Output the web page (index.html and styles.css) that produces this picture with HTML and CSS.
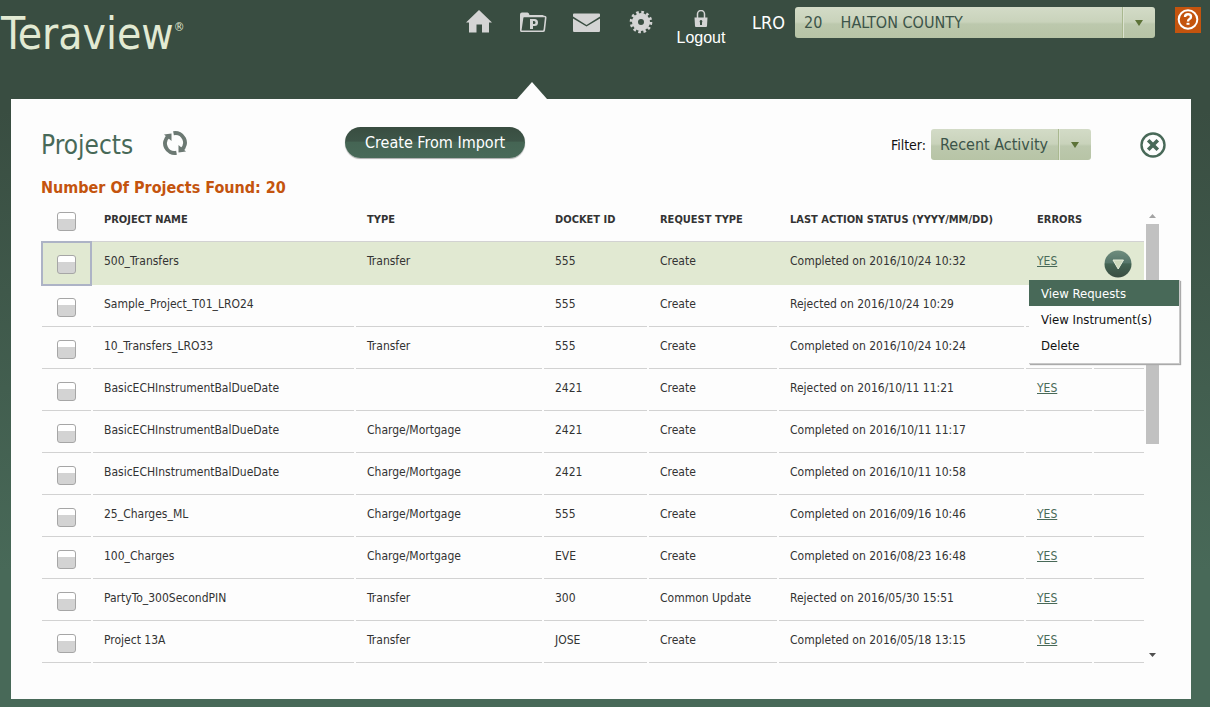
FILE: index.html
```html
<!DOCTYPE html>
<html lang="en">
<head>
<meta charset="utf-8">
<title>Teraview - Projects</title>
<link rel="stylesheet" href="styles.css">
</head>
<body>
<header class="topbar">
  <div class="logo">Teraview<span class="logo-mark">®</span></div>
  <nav class="nav">
    <a class="nav-item" href="#home" aria-label="Home">
      <svg width="28" height="24" viewBox="0 0 28 24"><path d="M14 0 27 12.500H24V22.500h-7v-8h-5.500v8H4V12.500H1z" fill="#d4d4d4"/></svg>
    </a>
    <a class="nav-item active" href="#projects" aria-label="Projects">
      <svg width="28" height="24" viewBox="0 0 28 24"><path d="M1 20V4.500Q1 2.500 3 2.500h5.500Q10 2.500 10.500 5H23.500q1.500 0 1.500 2H3v13z" fill="#d4d4d4"/><path d="M5 6.500h20.500q1.300 0 1.200 1.200L25.300 20q-.2 1.200-1.400 1.200H2.800q-1.200 0-1-1.200L3.600 7.700Q3.800 6.500 5 6.500z" fill="#394d41" stroke="#d4d4d4" stroke-width="1.600"/><path d="M11 9h4.500a3.500 3.500 0 0 1 0 7H14v3h-3zM14 11v3h1a1.500 1.500 0 0 0 0-3z" fill="#d4d4d4" fill-rule="evenodd"/></svg>
    </a>
    <a class="nav-item" href="#mail" aria-label="Mail">
      <svg width="28" height="24" viewBox="0 0 28 24"><path d="M0 6.500V4.500q0-1 1-1h25q1 0 1 1v2l-13.500 8.500zM0 8.500l13.500 8L27 8.500V20.500q0 1.500-1 1.500H1Q0 22 0 20.500z" fill="#d4d4d4"/></svg>
    </a>
    <a class="nav-item" href="#settings" aria-label="Settings">
      <svg width="24" height="24" viewBox="-12 -12 24 24"><circle r="6" fill="none" stroke="#d4d4d4" stroke-width="6"/><circle r="9.800" fill="none" stroke="#d4d4d4" stroke-width="3" stroke-dasharray="2.600 2.531"/></svg>
    </a>
    <a class="nav-item logout" href="#logout">
      <svg width="14" height="18" viewBox="0 0 14 18"><path d="M3.500 8V4a3.500 3.500 0 0 1 7 0v4" fill="none" stroke="#d4d4d4" stroke-width="1.500"/><path d="M.5 7.500h13L13 16q0 1-1 1H2q-1 0-1-1z" fill="#d4d4d4"/><path d="M7 10a1.500 1.500 0 0 1 1 2.500V15H6v-2.500A1.500 1.500 0 0 1 7 10z" fill="#394d41"/></svg>
      <span>Logout</span>
    </a>
  </nav>
  <div class="lro">
    <label for="lro">LRO</label>
    <span class="picker picker-lro">
      <select id="lro"><option>20&nbsp;&nbsp;&nbsp;&nbsp;HALTON COUNTY</option></select>
    </span>
  </div>
  <a class="help" href="#help" aria-label="Help">
    <svg width="26" height="26" viewBox="0 0 26 26"><circle cx="13" cy="12.500" r="9.300" fill="none" stroke="#fff" stroke-width="2"/><path d="M10 10q0-2.800 3-2.800t3 2.500q0 1.500-1.500 2.300T13 14.500" fill="none" stroke="#fff" stroke-width="2.400"/><path d="M11.500 15.800h3v2h-3z" fill="#fff"/></svg>
  </a>
</header>

<main class="panel">
  <div class="toolbar">
    <h1>Projects</h1>
    <button class="icon-button refresh" type="button" aria-label="Refresh">
      <svg width="24" height="24" viewBox="0 0 24 24"><g fill="none" stroke="#6c7973" stroke-width="4"><path d="M13.500 21.800A9.600 9.600 0 0 1 5.500 5"/><path d="M10.500 2.200A9.600 9.600 0 0 1 18.500 19"/></g><path d="M1 3.500 8.500 2.500V10z" fill="#6c7973"/><path d="M23 20.500l-7.500 1V14z" fill="#6c7973"/></svg>
    </button>
    <button class="import" type="button">Create From Import</button>
    <div class="filter">
      <label for="filter">Filter:</label>
      <span class="picker picker-filter">
        <select id="filter"><option>Recent Activity</option></select>
      </span>
    </div>
    <button class="icon-button close" type="button" aria-label="Close">
      <svg width="26" height="26" viewBox="0 0 26 26"><circle cx="13" cy="13" r="11.500" fill="none" stroke="#486958" stroke-width="2.400"/><path d="M8.200 8.200l9.600 9.600M17.800 8.200l-9.600 9.600" stroke="#486958" stroke-width="3.600"/></svg>
    </button>
  </div>
  <h2>Number Of Projects Found: 20</h2>

  <div class="list">
    <table class="projects">
      <colgroup><col class="c-check"><col><col class="c-type"><col class="c-docket"><col class="c-request"><col class="c-status"><col class="c-errors"><col class="c-menu"></colgroup>
      <thead>
        <tr><th><input type="checkbox" aria-label="Select all"></th><th>PROJECT NAME</th><th>TYPE</th><th>DOCKET ID</th><th>REQUEST TYPE</th><th>LAST ACTION STATUS (YYYY/MM/DD)</th><th>ERRORS</th><th></th></tr>
      </thead>
      <tbody>
        <tr class="selected"><td><input type="checkbox" aria-label="500_Transfers"></td><td>500_Transfers</td><td>Transfer</td><td>555</td><td>Create</td><td>Completed on 2016/10/24 10:32</td><td><a href="#e1">YES</a></td>
          <td class="actions">
            <button class="icon-button" type="button" aria-label="Actions">
              <svg width="28" height="28" viewBox="0 0 28 28"><defs><linearGradient id="ball" x2="0" y2="1"><stop offset="0" stop-color="#6f8d7e"/><stop offset=".45" stop-color="#56766a"/><stop offset=".5" stop-color="#446453"/><stop offset="1" stop-color="#394d41"/></linearGradient></defs><circle cx="14" cy="14" r="13.500" fill="url(#ball)"/><path d="M9 10h10.500L14.200 19z" fill="#cdd9bd" stroke="#e6eedb"/></svg>
            </button>
            <div class="menu" role="menu">
              <button class="current" type="button" role="menuitem">View Requests</button>
              <button type="button" role="menuitem">View Instrument(s)</button>
              <button type="button" role="menuitem">Delete</button>
            </div>
          </td></tr>
        <tr><td><input type="checkbox" aria-label="Sample_Project_T01_LRO24"></td><td>Sample_Project_T01_LRO24</td><td></td><td>555</td><td>Create</td><td>Rejected on 2016/10/24 10:29</td><td></td><td></td></tr>
        <tr><td><input type="checkbox" aria-label="10_Transfers_LRO33"></td><td>10_Transfers_LRO33</td><td>Transfer</td><td>555</td><td>Create</td><td>Completed on 2016/10/24 10:24</td><td></td><td></td></tr>
        <tr><td><input type="checkbox" aria-label="BasicECHInstrumentBalDueDate"></td><td>BasicECHInstrumentBalDueDate</td><td></td><td>2421</td><td>Create</td><td>Rejected on 2016/10/11 11:21</td><td><a href="#e4">YES</a></td><td></td></tr>
        <tr><td><input type="checkbox" aria-label="BasicECHInstrumentBalDueDate"></td><td>BasicECHInstrumentBalDueDate</td><td>Charge/Mortgage</td><td>2421</td><td>Create</td><td>Completed on 2016/10/11 11:17</td><td></td><td></td></tr>
        <tr><td><input type="checkbox" aria-label="BasicECHInstrumentBalDueDate"></td><td>BasicECHInstrumentBalDueDate</td><td>Charge/Mortgage</td><td>2421</td><td>Create</td><td>Completed on 2016/10/11 10:58</td><td></td><td></td></tr>
        <tr><td><input type="checkbox" aria-label="25_Charges_ML"></td><td>25_Charges_ML</td><td>Charge/Mortgage</td><td>555</td><td>Create</td><td>Completed on 2016/09/16 10:46</td><td><a href="#e7">YES</a></td><td></td></tr>
        <tr><td><input type="checkbox" aria-label="100_Charges"></td><td>100_Charges</td><td>Charge/Mortgage</td><td>EVE</td><td>Create</td><td>Completed on 2016/08/23 16:48</td><td><a href="#e8">YES</a></td><td></td></tr>
        <tr><td><input type="checkbox" aria-label="PartyTo_300SecondPIN"></td><td>PartyTo_300SecondPIN</td><td>Transfer</td><td>300</td><td>Common Update</td><td>Rejected on 2016/05/30 15:51</td><td><a href="#e9">YES</a></td><td></td></tr>
        <tr><td><input type="checkbox" aria-label="Project 13A"></td><td>Project 13A</td><td>Transfer</td><td>JOSE</td><td>Create</td><td>Completed on 2016/05/18 13:15</td><td><a href="#e10">YES</a></td><td></td></tr>
      </tbody>
    </table>
    <div class="scrollbar" aria-hidden="true">
      <svg width="7" height="4" viewBox="0 0 7 4"><path d="M0 4 3.500 0 7 4z" fill="#a3a3a3"/></svg>
      <div class="thumb-track"><div class="thumb"></div></div>
      <svg width="7" height="4" viewBox="0 0 7 4"><path d="M0 0h7L3.500 4z" fill="#505050"/></svg>
    </div>
  </div>
</main>
</body>
</html>
```
FILE: styles.css
```css
* { box-sizing: border-box; }

body {
  margin: 0;
  min-height: 100vh;
  display: flex;
  flex-direction: column;
  font: 12px/16px "DejaVu Sans Condensed", "Noto Sans", sans-serif;
  color: #333;
  background: linear-gradient(#394d41 110px, #486958 570px);
}

button, select { font: inherit; color: inherit; }

/* Top bar */
.topbar {
  display: flex;
  align-items: flex-start;
  height: 99px;
  padding-right: 9px;
}

.logo {
  display: flex;
  padding: 7px 0 0 1px;
  font-size: 44px;
  line-height: 54px;
  color: #e2ead3;
}

.logo-mark { font-size: 12px; line-height: 40px; }

.nav { display: flex; align-self: stretch; margin-left: auto; }

.nav-item {
  position: relative;
  width: 54px;
  padding-top: 10px;
  display: flex;
  flex-direction: column;
  align-items: center;
  color: #fff;
  text-decoration: none;
}

.nav-item.active::after {
  content: "";
  position: absolute;
  left: 11px;
  bottom: 0;
  border: solid transparent;
  border-width: 0 15px 17px;
  border-bottom-color: #fdfdfd;
}

.logout { width: 66px; font: 16px/20px "Liberation Sans", Arial, sans-serif; }

.lro {
  display: flex;
  align-items: center;
  gap: 10px;
  margin: 7px 20px 0 18px;
  font-size: 18px;
}

.lro label { color: #fff; }

.picker { position: relative; display: block; }

.picker select {
  appearance: none;
  display: block;
  width: 100%;
  height: 31px;
  margin: 0;
  padding: 1px 34px 0 9px;
  border: 0;
  border-radius: 3px;
  font-size: 16px;
  color: #3c5449;
  background: linear-gradient(#d3dbc7, #c9d3bb 48%, #bcc8ad 55%, #b7c4a6);
}

.picker::before {
  content: "";
  position: absolute;
  top: 0;
  bottom: 0;
  right: 31px;
  width: 2px;
  background: linear-gradient(to right, #a9b88f 50%, #dbe2d0 50%);
  pointer-events: none;
}

.picker::after {
  content: "";
  position: absolute;
  top: 13px;
  right: 12px;
  border: solid transparent;
  border-width: 6px 4px 0;
  border-top-color: #5d7338;
  pointer-events: none;
}

.picker-lro { width: 360px; }
.picker-filter { width: 160px; }

.help { display: block; margin-top: 7px; background: #c4540e; }
.help svg { display: block; }

/* Panel */
.panel {
  flex: 1;
  margin: 0 19px 8px 11px;
  padding: 28px 25px 36px 30px;
  background: #fdfdfd;
}

.toolbar { display: flex; align-items: center; height: 35px; }

h1 { margin: 0; font-size: 26px; line-height: 32px; font-weight: normal; color: #486958; }

.icon-button { display: block; padding: 0; border: 0; background: none; }
.icon-button svg { display: block; }
.refresh { margin: 0 0 3px 30px; }

.import {
  align-self: flex-start;
  width: 180px;
  height: 31px;
  margin-left: 158px;
  padding: 0;
  border: 0;
  border-radius: 16px;
  font-size: 16px;
  color: #fff;
  background: linear-gradient(#394d41, #3d5548 45%, #456554 50%, #486958);
  box-shadow: 0 1px 1px #aaa;
}

.filter {
  display: flex;
  align-items: center;
  gap: 5px;
  margin-left: auto;
  font-size: 14px;
  color: #111;
}

.close { margin-left: 49px; }

h2 { margin: 14px 0 0; font-size: 16px; line-height: 24px; font-weight: bold; color: #c4540e; }

/* Project list */
.list { display: flex; margin-left: -1px; margin-right: 7px; }

.projects {
  flex: 1;
  table-layout: fixed;
  border-collapse: separate;
  border-spacing: 2px 0;
}

.c-check { width: 49px; }
.c-type { width: 186px; }
.c-docket { width: 103px; }
.c-request { width: 128px; }
.c-status { width: 245px; }
.c-errors { width: 66px; }
.c-menu { width: 50px; }

th, td {
  height: 42px;
  padding: 11px 0 14px 11px;
  border-bottom: 1px solid #d2d2d2;
  text-align: left;
  vertical-align: top;
  white-space: nowrap;
}

th { padding-top: 12px; padding-bottom: 13px; font-size: 11px; }
td:nth-child(7) a { color: #486958; }

th:first-child, td:first-child { padding: 13px 0 0 15px; }
th:first-child { padding-top: 12px; }

input[type="checkbox"] {
  appearance: none;
  display: block;
  width: 19px;
  height: 19px;
  margin: 0;
  border: 1px solid #a6a6a6;
  border-radius: 3px;
  background: linear-gradient(#fff 35%, #d3d3d3 35%);
}

/* The shadows carry the row colour and its top rule across the column gaps. */
.selected td { height: 43px; border-bottom-color: transparent; background: #e1e9d2; }
.selected td:not(:last-child) { box-shadow: 2px 0 #e1e9d2, 2px -1px #d2d2d2; }
.selected td:first-child { outline: 2px solid #adb3c6; outline-offset: -1px; }

td.actions { position: relative; padding: 8px 0 0 10px; }

.menu {
  position: absolute;
  z-index: 1;
  top: 38px;
  right: -36px;
  width: 151px;
  padding-bottom: 5px;
  background: #fdfdfd;
  border-right: 1px solid #c8c8c8;
  border-bottom: 1px solid #c8c8c8;
  box-shadow: 1px 1px 1px #aaa;
}

.menu button {
  display: block;
  width: 100%;
  height: 26px;
  padding: 2px 0 0 12px;
  border: 0;
  font-size: 13px;
  text-align: left;
  color: #111;
  background: none;
}

.menu .current { color: #fff; background: #486958; }

.scrollbar {
  display: flex;
  flex-direction: column;
  align-items: center;
  width: 13px;
  padding: 14px 0 6px;
}

.thumb-track { flex: 1; align-self: stretch; margin: 6px 0; }
.thumb { height: 52%; background: #c1c1c1; }
```
